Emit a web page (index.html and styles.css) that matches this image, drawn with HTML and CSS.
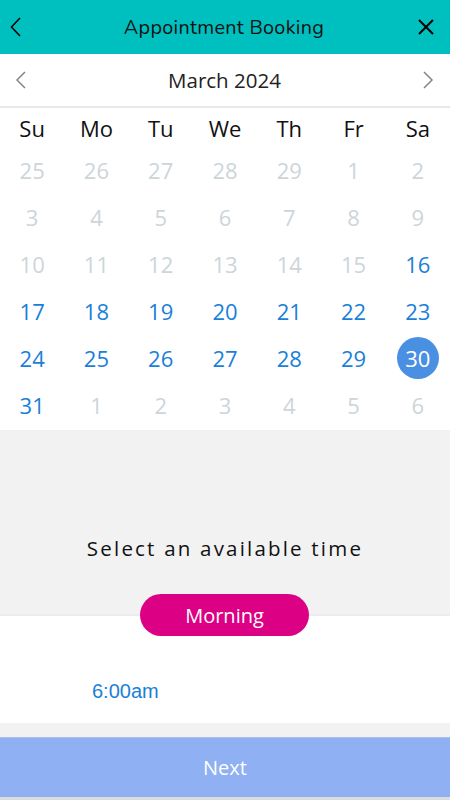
FILE: index.html
```html
<!DOCTYPE html>
<html>
<head>
<meta charset="utf-8">
<link rel="stylesheet" href="styles.css">
</head>
<body>
<div class="app">
  <header class="topbar">
    <span class="icon-btn back">
      <svg width="12" height="20" viewBox="0 0 12 20"><path d="M10 1 L1.5 10 L10 19" fill="none" stroke="#000" stroke-width="1.6"/></svg>
    </span>
    <h1 class="title">Appointment Booking</h1>
    <span class="icon-btn close">
      <svg width="20" height="20" viewBox="0 0 20 20"><path d="M3 3 L17 17 M17 3 L3 17" fill="none" stroke="#000" stroke-width="2"/></svg>
    </span>
  </header>

  <div class="monthbar">
    <span class="nav">
      <svg width="12" height="20" viewBox="0 0 12 20"><path d="M10 2 L2 10 L10 18" fill="none" stroke="#7d868c" stroke-width="1.5"/></svg>
    </span>
    <span class="month">March 2024</span>
    <span class="nav">
      <svg width="12" height="20" viewBox="0 0 12 20"><path d="M2 2 L10 10 L2 18" fill="none" stroke="#7d868c" stroke-width="1.5"/></svg>
    </span>
  </div>

  <div class="calendar">
    <div class="wd">Su</div><div class="wd">Mo</div><div class="wd">Tu</div><div class="wd">We</div><div class="wd">Th</div><div class="wd">Fr</div><div class="wd">Sa</div>

    <div class="d off">25</div><div class="d off">26</div><div class="d off">27</div><div class="d off">28</div><div class="d off">29</div><div class="d off">1</div><div class="d off">2</div>
    <div class="d off">3</div><div class="d off">4</div><div class="d off">5</div><div class="d off">6</div><div class="d off">7</div><div class="d off">8</div><div class="d off">9</div>
    <div class="d off">10</div><div class="d off">11</div><div class="d off">12</div><div class="d off">13</div><div class="d off">14</div><div class="d off">15</div><div class="d on">16</div>
    <div class="d on">17</div><div class="d on">18</div><div class="d on">19</div><div class="d on">20</div><div class="d on">21</div><div class="d on">22</div><div class="d on">23</div>
    <div class="d on">24</div><div class="d on">25</div><div class="d on">26</div><div class="d on">27</div><div class="d on">28</div><div class="d on">29</div><div class="d sel"><span>30</span></div>
    <div class="d on">31</div><div class="d off">1</div><div class="d off">2</div><div class="d off">3</div><div class="d off">4</div><div class="d off">5</div><div class="d off">6</div>
  </div>

  <section class="timehead">
    <p class="prompt">Select an available time</p>
  </section>

  <section class="slots">
    <div class="pill">Morning</div>
    <div class="slot">6:00am</div>
  </section>

  <div class="spacer"></div>

  <button class="next">Next</button>
</div>
</body>
</html>
```

FILE: styles.css
```css
* { box-sizing: border-box; }
html, body { margin: 0; padding: 0; }
body {
  width: 450px;
  height: 800px;
  background: #dcdcdc;
  font-family: "Open Sans", "Noto Sans", sans-serif;
  overflow: hidden;
}
.app {
  display: flex;
  flex-direction: column;
  height: 797px;
  background: #f2f2f2;
}
.topbar {
  height: 54px;
  background: #00bfbf;
  display: flex;
  align-items: center;
  justify-content: space-between;
  padding: 0 12px 0 10px;
}
.icon-btn { display: flex; align-items: center; height: 24px; }
.back { width: 24px; justify-content: flex-start; }
.close { width: 24px; justify-content: center; }
.title {
  margin: 0;
  font-size: 19.8px;
  font-weight: 400;
  color: #111;
  letter-spacing: 0.3px;
  font-family: "Nunito", "Lato", "Open Sans", sans-serif;
}
.monthbar {
  height: 54px;
  background: #fff;
  border-bottom: 2px solid #e6e9ec;
  display: flex;
  align-items: center;
  justify-content: space-between;
  padding: 0 16px 0 15px;
}
.nav { display: flex; align-items: center; }
.month { font-size: 20.5px; color: #222; }
.calendar {
  background: #fff;
  display: grid;
  grid-template-columns: repeat(7, 1fr);
  grid-auto-rows: 47px;
  grid-template-rows: 38px;
  padding-bottom: 2px;
}
.wd {
  display: flex;
  align-items: center;
  justify-content: center;
  font-size: 22px;
  color: #111;
  padding-top: 2px;
}
.d {
  display: flex;
  align-items: center;
  justify-content: center;
  font-size: 22px;
}
.off { color: #cdd5d9; }
.on { color: #1a7fd8; }
.sel span {
  width: 42px;
  height: 42px;
  border-radius: 50%;
  background: #4a90e2;
  color: #fff;
  display: flex;
  align-items: center;
  justify-content: center;
}
.timehead {
  height: 184px;
  display: flex;
  align-items: flex-end;
  justify-content: center;
  padding-bottom: 52px;
}
.prompt {
  margin: 0;
  font-size: 20.5px;
  letter-spacing: 2.2px;
  color: #111;
}
.slots {
  position: relative;
  background: #fff;
  border-top: 2px solid #eaedf0;
  height: 109px;
  padding: 64px 0 0 92px;
}
.pill {
  position: absolute;
  left: 140px;
  top: -22px;
  width: 169px;
  height: 42px;
  border-radius: 21px;
  background: #db0084;
  color: #fff;
  font-size: 20px;
  display: flex;
  align-items: center;
  justify-content: center;
}
.slot {
  font-family: "Liberation Sans", Arial, sans-serif;
  font-size: 20px;
  color: #1a7fd8;
}
.spacer { height: 14px; }
.next {
  height: 60px;
  border: 0;
  border-top: 1px solid #a9c0ee;
  background: #8fb0f2;
  color: #fff;
  font-family: "Open Sans", sans-serif;
  font-size: 20px;
  width: 100%;
  padding: 0;
}
```
